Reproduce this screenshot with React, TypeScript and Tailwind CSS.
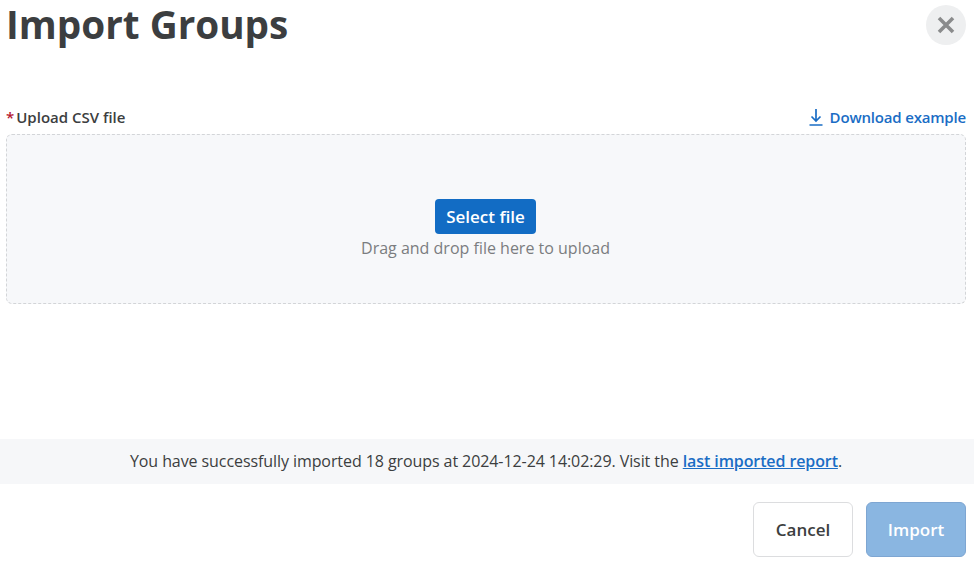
export default function App() {
  return (
    <div className="flex h-[563px] w-[974px] flex-col overflow-hidden bg-white font-['Open_Sans',sans-serif] text-[#3c3e40]">
      <div className="flex h-[51px] items-start justify-between pl-[6px] pr-2">
        <h1 className="text-[38.7px] leading-[48px] font-bold">Import Groups</h1>
        <button className="mt-[5px] flex h-10 w-10 items-center justify-center rounded-full bg-[#eeeff0]">
          <svg width="18" height="18" viewBox="0 0 18 18" fill="none" stroke="#8a8b8c" strokeWidth="3.6">
            <path d="M2 2 16 16M16 2 2 16" />
          </svg>
        </button>
      </div>

      <div className="mt-[52px] flex h-7 items-center justify-between pl-[6px] pr-2">
        <div className="flex items-center text-[15px] font-semibold">
          <span className="mr-[2px] text-[#b5162f]">*</span>
          Upload CSV file
        </div>
        <a className="flex items-center gap-[7px] text-[15px] font-semibold tracking-[-0.18px] text-[#1a6dc5]">
          <svg width="14" height="18" viewBox="0 0 14 18" fill="none" stroke="#1a6dc5" strokeWidth="1.7">
            <path d="M7 1v12M2.5 8.5 7 13l4.5-4.5M0.5 17h13" />
          </svg>
          Download example
        </a>
      </div>

      <div className="mt-[3px] mr-2 ml-[6px] flex h-[170px] flex-col items-center rounded-md border border-dashed border-[#d3d5d8] bg-[#f7f8fa] pt-[64px] pr-px">
        <button className="h-[35px] w-[101px] rounded bg-[#126cc4] text-[17px] font-semibold text-white">Select file</button>
        <p className="mt-[2px] text-base leading-[24px] text-[#7b7d80]">Drag and drop file here to upload</p>
      </div>

      <div className="mt-[135px] flex h-[45px] items-center justify-center bg-[#f6f7f9] pr-[2px] pb-[2px] text-base">
        <span>
          <span className="tracking-[-0.08px]">You have successfully imported 18 groups at 2024-12-24 14:02:29. Visit the</span>{" "}
          <a className="font-semibold tracking-[-0.1px] text-[#1a6dc5] underline">last imported report</a>.
        </span>
      </div>

      <div className="mt-[18px] flex justify-end gap-[13px] pr-2">
        <button className="h-[55px] w-[100px] rounded-md border border-[#dcdddf] bg-white text-[17px] font-semibold">Cancel</button>
        <button className="h-[55px] w-[100px] rounded-md border border-[#7ea6d2] bg-[#8ab6e1] text-[17px] font-semibold text-white">Import</button>
      </div>
    </div>
  )
}
